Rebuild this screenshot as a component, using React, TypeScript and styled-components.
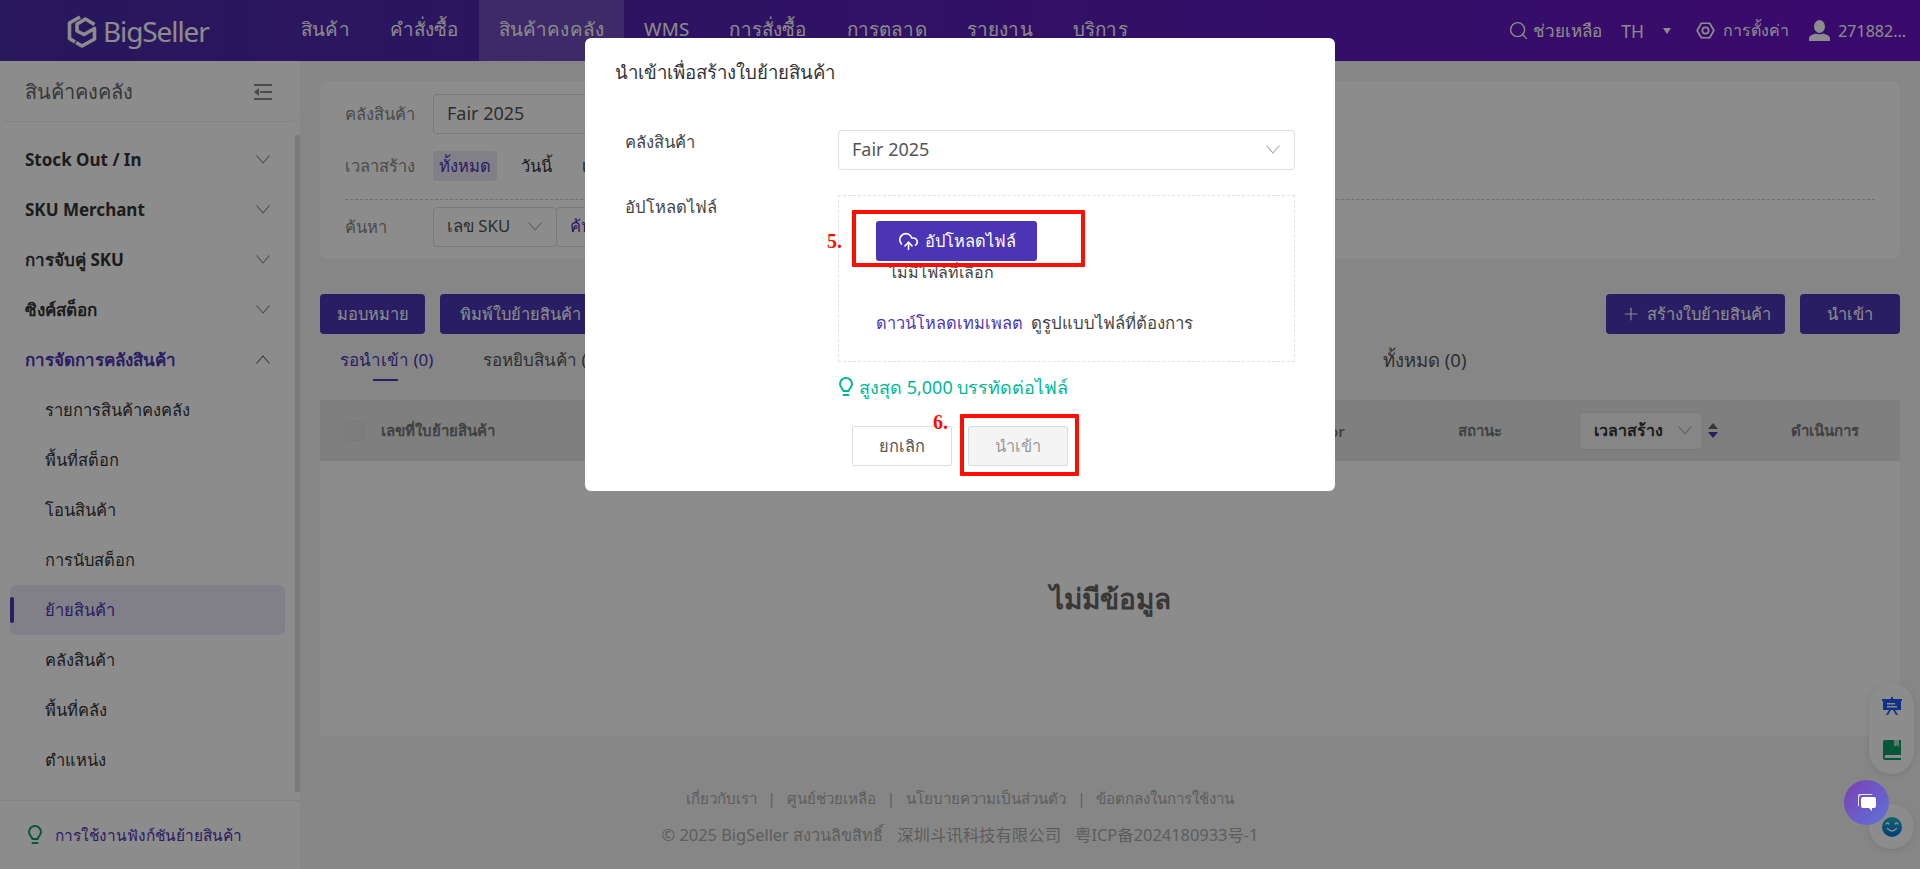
import React from 'react';
import styled, { createGlobalStyle } from 'styled-components';
import { CloudUpload, Plus, Search } from 'lucide-react';

const Global = createGlobalStyle`
  html, body {
    margin: 0;
    padding: 0;
    height: 100%;
    overflow: hidden;
    font-family: "Noto Sans", "Open Sans", "Noto Sans CJK SC", sans-serif;
    font-size: 15px;
    color: #333;
    background: #f5f5f5;
  }
  * { box-sizing: border-box; }
`;

const Page = styled.div`
  height: 869px;
  display: flex;
  flex-direction: column;
  overflow: hidden;
`;

const TopBar = styled.header`
  height: 61px;
  flex: none;
  display: flex;
  align-items: stretch;
  background: linear-gradient(90deg, #4a2ca8 0%, #5a20b8 50%, #6a12c8 100%);
  color: #fff;
`;

const Logo = styled.div`
  width: 281px;
  padding-left: 67px;
  display: flex;
  align-items: center;
  gap: 6px;
  font-size: 28px;
  letter-spacing: -1.1px;
  color: #fff;
`;

const Nav = styled.nav`
  display: flex;
  flex: 1;
`;

const NavItem = styled.div<{ $active?: boolean }>`
  display: flex;
  align-items: center;
  padding: 0 20px 3px;
  font-size: 18.8px;
  letter-spacing: 0.17px;
  background: ${p => (p.$active ? 'rgba(255,255,255,0.18)' : 'transparent')};
`;

const TopTools = styled.div`
  display: flex;
  align-items: center;
  padding-right: 14px;
`;

const Tool = styled.span<{ $gap?: number; $fs?: number; $inner?: number }>`
  display: inline-flex;
  align-items: center;
  gap: ${p => p.$inner ?? 4}px;
  margin-right: ${p => p.$gap ?? 20}px;
  font-size: ${p => p.$fs ?? 16}px;
`;

const Caret = styled.i`
  width: 0;
  height: 0;
  margin-left: 15px;
  border-left: 4px solid transparent;
  border-right: 4px solid transparent;
  border-top: 6px solid #fff;
`;

const Shell = styled.div`
  flex: 1;
  display: flex;
  min-height: 0;
`;

const Sidebar = styled.aside`
  width: 300px;
  flex: none;
  display: flex;
  flex-direction: column;
  background: #fff;
`;

const SideHead = styled.div`
  height: 61px;
  flex: none;
  padding: 2px 28px 0 25px;
  display: flex;
  align-items: center;
  justify-content: space-between;
  font-size: 20px;
  color: #666;
  border-bottom: 1px solid #eee;
  border-radius: 0 0 8px 8px;
`;

const SideScroll = styled.div`
  position: relative;
  flex: 1;
  padding-top: 13px;
  border-bottom: 1px solid #eee;
`;

const ScrollThumb = styled.div`
  position: absolute;
  right: 0;
  top: 13px;
  bottom: 8px;
  width: 5px;
  border-radius: 3px;
  background: #ddd;
`;

const Group = styled.div<{ $open?: boolean }>`
  height: 50px;
  padding: 0 30px 2px 25px;
  display: flex;
  align-items: center;
  justify-content: space-between;
  font-size: 17px;
  font-weight: 700;
  color: ${p => (p.$open ? '#4c35b5' : '#333')};
`;

const SubItem = styled.div<{ $active?: boolean }>`
  position: relative;
  height: 50px;
  margin: 0 15px 0 10px;
  padding-left: 35px;
  display: flex;
  align-items: center;
  font-size: 16.5px;
  border-radius: 6px;
  color: ${p => (p.$active ? '#4c35b5' : '#333')};
  background: ${p => (p.$active ? '#ece9f8' : 'transparent')};
  ${p =>
    p.$active &&
    `&::before {
      content: '';
      position: absolute;
      left: 0;
      top: 12px;
      bottom: 12px;
      width: 4px;
      border-radius: 2px;
      background: #4c35b5;
    }`}
`;

const SideTip = styled.div`
  height: 68px;
  flex: none;
  padding-left: 27px;
  display: flex;
  align-items: center;
  gap: 12px;
  font-size: 15.4px;
  color: #4c35b5;
`;

const Main = styled.main`
  flex: 1;
  min-width: 0;
  padding: 20px 20px 0;
  display: flex;
  flex-direction: column;
`;

const FilterCard = styled.section`
  height: 178px;
  padding: 13px 25px 0;
  background: #fff;
  border-radius: 8px;
`;

const FilterRow = styled.div<{ $h: number }>`
  height: ${p => p.$h}px;
  display: flex;
  align-items: center;
`;

const FilterLabel = styled.span`
  width: 88px;
  flex: none;
  color: #888;
  font-size: 16.5px;
`;

const Dashed = styled.div`
  margin: 1px 0 7px;
  border-top: 1px dashed #ccc;
`;

const FieldBox = styled.div<{ $w: number; $joined?: boolean; $fs?: number }>`
  width: ${p => p.$w}px;
  height: 40px;
  flex: none;
  margin-left: ${p => (p.$joined ? -1 : 0)}px;
  padding: 0 14px 2px 13px;
  display: flex;
  align-items: center;
  justify-content: space-between;
  border: 1px solid #ddd;
  border-radius: 4px;
  background: #fff;
  font-size: ${p => p.$fs ?? 18}px;
  color: #555;
`;

const Pill = styled.span<{ $on?: boolean }>`
  padding: 2px 6px;
  margin-right: 18px;
  border-radius: 3px;
  font-size: 16.5px;
  color: ${p => (p.$on ? '#4c35b5' : '#333')};
  background: ${p => (p.$on ? '#ece9f8' : 'transparent')};
`;

const PurpleText = styled.span`
  color: #4c35b5;
  font-size: 16.5px;
`;

const ActionRow = styled.div`
  margin-top: 35px;
  height: 40px;
  display: flex;
  align-items: stretch;
  justify-content: space-between;
`;

const ActionSet = styled.div`
  display: flex;
  gap: 15px;
`;

const SolidButton = styled.button<{ $w: number }>`
  width: ${p => p.$w}px;
  display: flex;
  align-items: center;
  justify-content: center;
  gap: 6px;
  border: none;
  border-radius: 4px;
  background: #4c35b5;
  color: #fff;
  font: inherit;
  font-size: 16.4px;
`;

const Tabs = styled.div`
  height: 66px;
  position: relative;
`;

const Tab = styled.div<{ $active?: boolean; $left: number; $fs?: number }>`
  position: absolute;
  left: ${p => p.$left}px;
  top: 12px;
  font-size: ${p => p.$fs ?? 17}px;
  color: ${p => (p.$active ? '#4c35b5' : '#555')};
  ${p =>
    p.$active &&
    `&::after {
      content: '';
      position: absolute;
      left: 33px;
      bottom: -8px;
      width: 25px;
      height: 2px;
      background: #4c35b5;
    }`}
`;

const TableCard = styled.section`
  height: 336px;
  display: flex;
  flex-direction: column;
  background: #fff;
`;

const TableHead = styled.div`
  height: 61px;
  flex: none;
  position: relative;
  display: flex;
  align-items: center;
  background: #e8e8e8;
  font-size: 15px;
  font-weight: 600;
  color: #777;
`;

const CheckBox = styled.span`
  width: 20px;
  height: 20px;
  margin: 0 16px 0 25px;
  border: 1px solid #ddd;
  border-radius: 3px;
  background: #e4e4e4;
`;

const HeadCell = styled.span<{ $left: number }>`
  position: absolute;
  left: ${p => p.$left}px;
  display: inline-flex;
  align-items: center;
`;

const HeadSelect = styled.div`
  width: 124px;
  height: 38px;
  padding: 0 10px 0 14px;
  display: flex;
  align-items: center;
  justify-content: space-between;
  border: 1px solid #ddd;
  border-radius: 5px;
  background: #f5f5f5;
  color: #333;
  font-size: 16px;
  font-weight: 700;
`;

const Empty = styled.div`
  flex: 1;
  display: flex;
  align-items: center;
  justify-content: center;
  font-size: 28px;
  font-weight: 700;
  color: #666;
`;

const Footer = styled.footer`
  padding: 52px 300px 0 0;
  display: flex;
  flex-direction: column;
  align-items: center;
  gap: 15px;
  color: #aaa;
`;

const FootLinks = styled.div`
  display: flex;
  gap: 11px;
  line-height: 21px;
  font-size: 15.1px;
`;

const FootCopy = styled.div`
  display: flex;
  gap: 14px;
  line-height: 21px;
  font-size: 16.4px;
`;

const Overlay = styled.div`
  position: fixed;
  inset: 0;
  background: rgba(0, 0, 0, 0.45);
`;

const FloatPill = styled.div<{ $top: number; $h: number }>`
  position: fixed;
  right: 6px;
  top: ${p => p.$top}px;
  width: 45px;
  height: ${p => p.$h}px;
  display: flex;
  flex-direction: column;
  align-items: center;
  justify-content: space-around;
  padding: 2px 0;
  border-radius: 23px;
  background: #fff;
  box-shadow: 0 2px 10px rgba(0, 0, 0, 0.12);
`;

const ChatBubble = styled.div`
  position: fixed;
  left: 1844px;
  top: 780px;
  width: 45px;
  height: 45px;
  display: flex;
  align-items: center;
  justify-content: center;
  border-radius: 50%;
  background: linear-gradient(135deg, #7a3fb4, #5f74d8);
`;

const Modal = styled.div`
  position: fixed;
  top: 38px;
  left: 50%;
  width: 750px;
  height: 453px;
  transform: translateX(-50%);
  background: #fff;
  border-radius: 6px;
  color: #333;
`;

const ModalTitle = styled.div`
  height: 68px;
  padding-left: 30px;
  display: flex;
  align-items: center;
  font-size: 18.6px;
`;

const ModalBody = styled.div`
  padding: 24px 40px 0;
`;

const FormRow = styled.div<{ $mb?: number }>`
  display: flex;
  margin-bottom: ${p => p.$mb ?? 0}px;
`;

const FormLabel = styled.div`
  width: 213px;
  flex: none;
  line-height: 24px;
  font-size: 16.6px;
  color: #444;
`;

const DropZone = styled.div`
  width: 457px;
  height: 167px;
  padding: 25px 0 0 37px;
  border: 1px dashed #e2e2e2;
`;

const UploadButton = styled.button`
  position: relative;
  width: 161px;
  height: 40px;
  display: flex;
  align-items: center;
  justify-content: center;
  gap: 6px;
  border: none;
  border-radius: 3px;
  background: #4c35b5;
  color: #fff;
  font: inherit;
  font-size: 16.4px;
  font-weight: 500;
`;

const RedBox = styled.div<{ $t: number; $r: number; $b: number; $l: number }>`
  position: absolute;
  top: ${p => p.$t}px;
  right: ${p => p.$r}px;
  bottom: ${p => p.$b}px;
  left: ${p => p.$l}px;
  border: 4px solid #ff0d00;
  border-radius: 1px;
  pointer-events: none;
`;

const StepMark = styled.span<{ $t: number; $l: number }>`
  position: absolute;
  top: ${p => p.$t}px;
  left: ${p => p.$l}px;
  font-family: "Liberation Serif", serif;
  font-weight: 700;
  font-size: 20px;
  line-height: 22px;
  color: #ff0d00;
`;

const NoFile = styled.div`
  margin: -1px 0 0 13px;
  line-height: 24px;
  font-size: 16px;
  color: #444;
`;

const TemplateLine = styled.div`
  margin-top: 27px;
  line-height: 24px;
  font-size: 16.8px;
  color: #444;
`;

const TemplateLink = styled.span`
  color: #4c35b5;
  font-size: 16.4px;
  margin-right: 8px;
`;

const Hint = styled.div`
  margin: 13px 0 0 213px;
  display: flex;
  align-items: center;
  gap: 5px;
  line-height: 24px;
  font-size: 18px;
  color: #00b894;
`;

const ModalActions = styled.div`
  margin: 27px 0 0 227px;
  display: flex;
  gap: 16px;
`;

const OutlineButton = styled.button<{ $off?: boolean }>`
  position: relative;
  width: 100px;
  height: 40px;
  border: 1px solid #ddd;
  border-radius: 2px;
  background: ${p => (p.$off ? '#f4f4f4' : '#fff')};
  color: ${p => (p.$off ? '#999' : '#555')};
  font: inherit;
  font-size: 16.4px;
`;

const Chevron = ({ up, color = '#888' }: { up?: boolean; color?: string }) => (
  <svg width="14" height="9" viewBox="0 0 14 9" fill="none" stroke={color} strokeWidth="1.1">
    <path d={up ? 'M0.5 8.500 7 1l6.500 7.500' : 'M0.500 0.500 7 8l6.500-7.500'} />
  </svg>
);

const LogoMark = () => (
  <svg width="30" height="34" viewBox="0 0 30 34" fill="none" stroke="#fff" strokeWidth="3.600" strokeLinejoin="round">
    <path d="M13 3 2.500 9v15.500L8 28" />
    <path d="M27.500 10.500 18.500 5 10 10v7l7 3.500 10.500-6V25L15 32l-6-3.500" />
  </svg>
);

const Bulb = ({ color, size }: { color: string; size: number }) => (
  <svg width={size * 0.8} height={size} viewBox="0 0 16 20" fill="none" stroke={color} strokeWidth="2">
    <path d="M5.500 14C5 11.500 2 10.500 2 7a6 6 0 0 1 12 0c0 3.500-3 4.500-3.500 7z" />
    <path d="M5.500 18h5" strokeLinecap="round" />
  </svg>
);

const GearIcon = () => (
  <svg width="21" height="21" viewBox="0 0 20 20" fill="none" stroke="#fff" strokeWidth="1.600" strokeLinejoin="round">
    <path d="M14 3.100 18 10l-4 6.900H6L2 10l4-6.900z" />
    <circle cx="10" cy="10" r="3" />
  </svg>
);

const UserIcon = () => (
  <svg width="21" height="22" viewBox="0 0 21 22" fill="#fff">
    <ellipse cx="10.500" cy="6.500" rx="5.500" ry="6.500" />
    <path d="M0 21v-3c0-2.500 4-3.500 6.500-4.500 1.500 1 6.500 1 8 0C17 14.500 21 15.500 21 18v3z" />
  </svg>
);

const CollapseIcon = () => (
  <svg width="18" height="16" viewBox="0 0 18 16" fill="#888">
    <rect x="0" y="0" width="18" height="2" />
    <rect x="0" y="14" width="18" height="2" />
    <rect x="6" y="7" width="12" height="2" />
    <path d="M0 8l5-4v8z" />
  </svg>
);

const SortIcon = () => (
  <svg width="10" height="15" viewBox="0 0 10 15">
    <path d="M5 0l5 6H0z" fill="#666" />
    <path d="M5 15l5-6H0z" fill="#4c35b5" />
  </svg>
);

const BoardIcon = () => (
  <svg width="20" height="19" viewBox="0 0 20 19" fill="#1e5cf5">
    <path d="M9 0h2v2h9v2h-1v9h-6l3 5h-2l-3-5h-2l-3 5H4l3-5H1V4H0V2h9z" />
    <path d="M5 6h8v1.500H5zM5 9h10v1.500H5z" fill="#fff" />
  </svg>
);

const BookIcon = () => (
  <svg width="18" height="20" viewBox="0 0 18 20">
    <path d="M2 0h16v15H3a1.500 1.500 0 0 0 0 3h15v2H2a2 2 0 0 1-2-2V2a2 2 0 0 1 2-2z" fill="#0a9e6a" />
    <path d="M11 0h5v7l-2.500-2L11 7z" fill="#a8e0c8" />
  </svg>
);

const SmileIcon = () => (
  <svg width="20" height="20" viewBox="0 0 20 20" fill="none">
    <defs>
      <linearGradient id="smile" x1="0" y1="0" x2="0" y2="1">
        <stop offset="0" stopColor="#14b8c8" />
        <stop offset="1" stopColor="#0a6ee0" />
      </linearGradient>
    </defs>
    <circle cx="10" cy="10" r="10" fill="url(#smile)" />
    <path d="M4 7q1.500-2 3 0M13 7q1.500-2 3 0M5.500 11.500q4.500 5 9 0" stroke="#fff" strokeWidth="1.300" strokeLinecap="round" />
  </svg>
);

const ChatIcon = () => (
  <svg width="18" height="17" viewBox="0 0 18 17" fill="#fff">
    <path d="M2 0h11a2 2 0 0 1 1.700 1H4a3 3 0 0 0-3 3v8.500A2 2 0 0 1 0 11V2a2 2 0 0 1 2-2z" opacity="0.85" />
    <path d="M5 3h11a2 2 0 0 1 2 2v7a2 2 0 0 1-2 2h-2v3l-3-3H5a2 2 0 0 1-2-2V5a2 2 0 0 1 2-2z" />
  </svg>
);

const navItems = ['สินค้า', 'คำสั่งซื้อ', 'สินค้าคงคลัง', 'WMS', 'การสั่งซื้อ', 'การตลาด', 'รายงาน', 'บริการ'];
const groups = ['Stock Out / In', 'SKU Merchant', 'การจับคู่ SKU', 'ซิงค์สต็อก'];
const subItems = ['รายการสินค้าคงคลัง', 'พื้นที่สต็อก', 'โอนสินค้า', 'การนับสต็อก', 'ย้ายสินค้า', 'คลังสินค้า', 'พื้นที่คลัง', 'ตำแหน่ง'];

export default function App() {
  return (
    <>
      <Global />
      <Page>
        <TopBar>
          <Logo>
            <LogoMark />
            BigSeller
          </Logo>
          <Nav>
            {navItems.map((item, i) => (
              <NavItem key={item} $active={i === 2}>{item}</NavItem>
            ))}
          </Nav>
          <TopTools>
            <Tool $gap={19} $fs={17}>
              <Search size={21} strokeWidth={1.6} />
              ช่วยเหลือ
            </Tool>
            <Tool $gap={24} $fs={17.5}>
              TH
              <Caret />
            </Tool>
            <Tool $gap={20} $inner={7}>
              <GearIcon />
              การตั้งค่า
            </Tool>
            <Tool $gap={0}>
              <UserIcon />
              &nbsp;271882...
            </Tool>
          </TopTools>
        </TopBar>
        <Shell>
          <Sidebar>
            <SideHead>
              สินค้าคงคลัง
              <CollapseIcon />
            </SideHead>
            <SideScroll>
              <ScrollThumb />
              {groups.map(g => (
                <Group key={g}>
                  {g}
                  <Chevron />
                </Group>
              ))}
              <Group $open>
                การจัดการคลังสินค้า
                <Chevron up color="#666" />
              </Group>
              {subItems.map((s, i) => (
                <SubItem key={s} $active={i === 4}>{s}</SubItem>
              ))}
            </SideScroll>
            <SideTip>
              <Bulb color="#0a9e6a" size={20} />
              การใช้งานฟังก์ชันย้ายสินค้า
            </SideTip>
          </Sidebar>
          <Main>
            <FilterCard>
              <FilterRow $h={40}>
                <FilterLabel>คลังสินค้า</FilterLabel>
                <FieldBox $w={300}>Fair 2025</FieldBox>
              </FilterRow>
              <FilterRow $h={64}>
                <FilterLabel>เวลาสร้าง</FilterLabel>
                <Pill $on>ทั้งหมด</Pill>
                <Pill>วันนี้</Pill>
                <Pill>เมื่อวาน</Pill>
              </FilterRow>
              <Dashed />
              <FilterRow $h={40}>
                <FilterLabel>ค้นหา</FilterLabel>
                <FieldBox $w={124} $fs={16.8}>
                  เลข SKU
                  <Chevron color="#aaa" />
                </FieldBox>
                <FieldBox $w={200} $joined>
                  <PurpleText>ค้นหา</PurpleText>
                </FieldBox>
              </FilterRow>
            </FilterCard>
            <ActionRow>
              <ActionSet>
                <SolidButton $w={105}>มอบหมาย</SolidButton>
                <SolidButton $w={160}>พิมพ์ใบย้ายสินค้า</SolidButton>
              </ActionSet>
              <ActionSet>
                <SolidButton $w={179}>
                  <Plus size={20} strokeWidth={1.4} />
                  สร้างใบย้ายสินค้า
                </SolidButton>
                <SolidButton $w={100}>นำเข้า</SolidButton>
              </ActionSet>
            </ActionRow>
            <Tabs>
              <Tab $active $left={20}>รอนำเข้า (0)</Tab>
              <Tab $left={163}>รอหยิบสินค้า (0)</Tab>
              <Tab $left={1063} $fs={18.5}>ทั้งหมด (0)</Tab>
            </Tabs>
            <TableCard>
              <TableHead>
                <CheckBox />
                เลขที่ใบย้ายสินค้า
                <HeadCell $left={958}>Operator</HeadCell>
                <HeadCell $left={1138}>สถานะ</HeadCell>
                <HeadCell $left={1259}>
                  <HeadSelect>
                    เวลาสร้าง
                    <Chevron color="#aaa" />
                  </HeadSelect>
                </HeadCell>
                <HeadCell $left={1388}><SortIcon /></HeadCell>
                <HeadCell $left={1471}>ดำเนินการ</HeadCell>
              </TableHead>
              <Empty>ไม่มีข้อมูล</Empty>
            </TableCard>
            <Footer>
              <FootLinks>
                <span>เกี่ยวกับเรา</span><span>|</span>
                <span>ศูนย์ช่วยเหลือ</span><span>|</span>
                <span>นโยบายความเป็นส่วนตัว</span><span>|</span>
                <span>ข้อตกลงในการใช้งาน</span>
              </FootLinks>
              <FootCopy>
                <span>© 2025 BigSeller สงวนลิขสิทธิ์</span>
                <span>深圳斗讯科技有限公司</span>
                <span>粤ICP备2024180933号-1</span>
              </FootCopy>
            </Footer>
          </Main>
        </Shell>
      </Page>
      <FloatPill $top={683} $h={91}>
        <BoardIcon />
        <BookIcon />
      </FloatPill>
      <FloatPill $top={804} $h={45}>
        <SmileIcon />
      </FloatPill>
      <Overlay />
      <ChatBubble><ChatIcon /></ChatBubble>
      <Modal>
        <ModalTitle>นำเข้าเพื่อสร้างใบย้ายสินค้า</ModalTitle>
        <ModalBody>
          <FormRow $mb={25}>
            <FormLabel>คลังสินค้า</FormLabel>
            <FieldBox $w={457}>
              Fair 2025
              <Chevron color="#aaa" />
            </FieldBox>
          </FormRow>
          <FormRow>
            <FormLabel>อัปโหลดไฟล์</FormLabel>
            <DropZone>
              <UploadButton>
                <CloudUpload size={21} strokeWidth={1.8} />
                อัปโหลดไฟล์
                <RedBox $t={-11} $r={-48} $b={-6} $l={-24} />
                <StepMark $t={9} $l={-49}>5.</StepMark>
              </UploadButton>
              <NoFile>ไม่มีไฟล์ที่เลือก</NoFile>
              <TemplateLine>
                <TemplateLink>ดาวน์โหลดเทมเพลต</TemplateLink>
                ดูรูปแบบไฟล์ที่ต้องการ
              </TemplateLine>
            </DropZone>
          </FormRow>
          <Hint>
            <Bulb color="#00b894" size={20} />
            สูงสุด 5,000 บรรทัดต่อไฟล์
          </Hint>
          <ModalActions>
            <OutlineButton>ยกเลิก</OutlineButton>
            <OutlineButton $off>
              นำเข้า
              <RedBox $t={-13} $r={-12} $b={-11} $l={-9} />
              <StepMark $t={-16} $l={-36}>6.</StepMark>
            </OutlineButton>
          </ModalActions>
        </ModalBody>
      </Modal>
    </>
  );
}
